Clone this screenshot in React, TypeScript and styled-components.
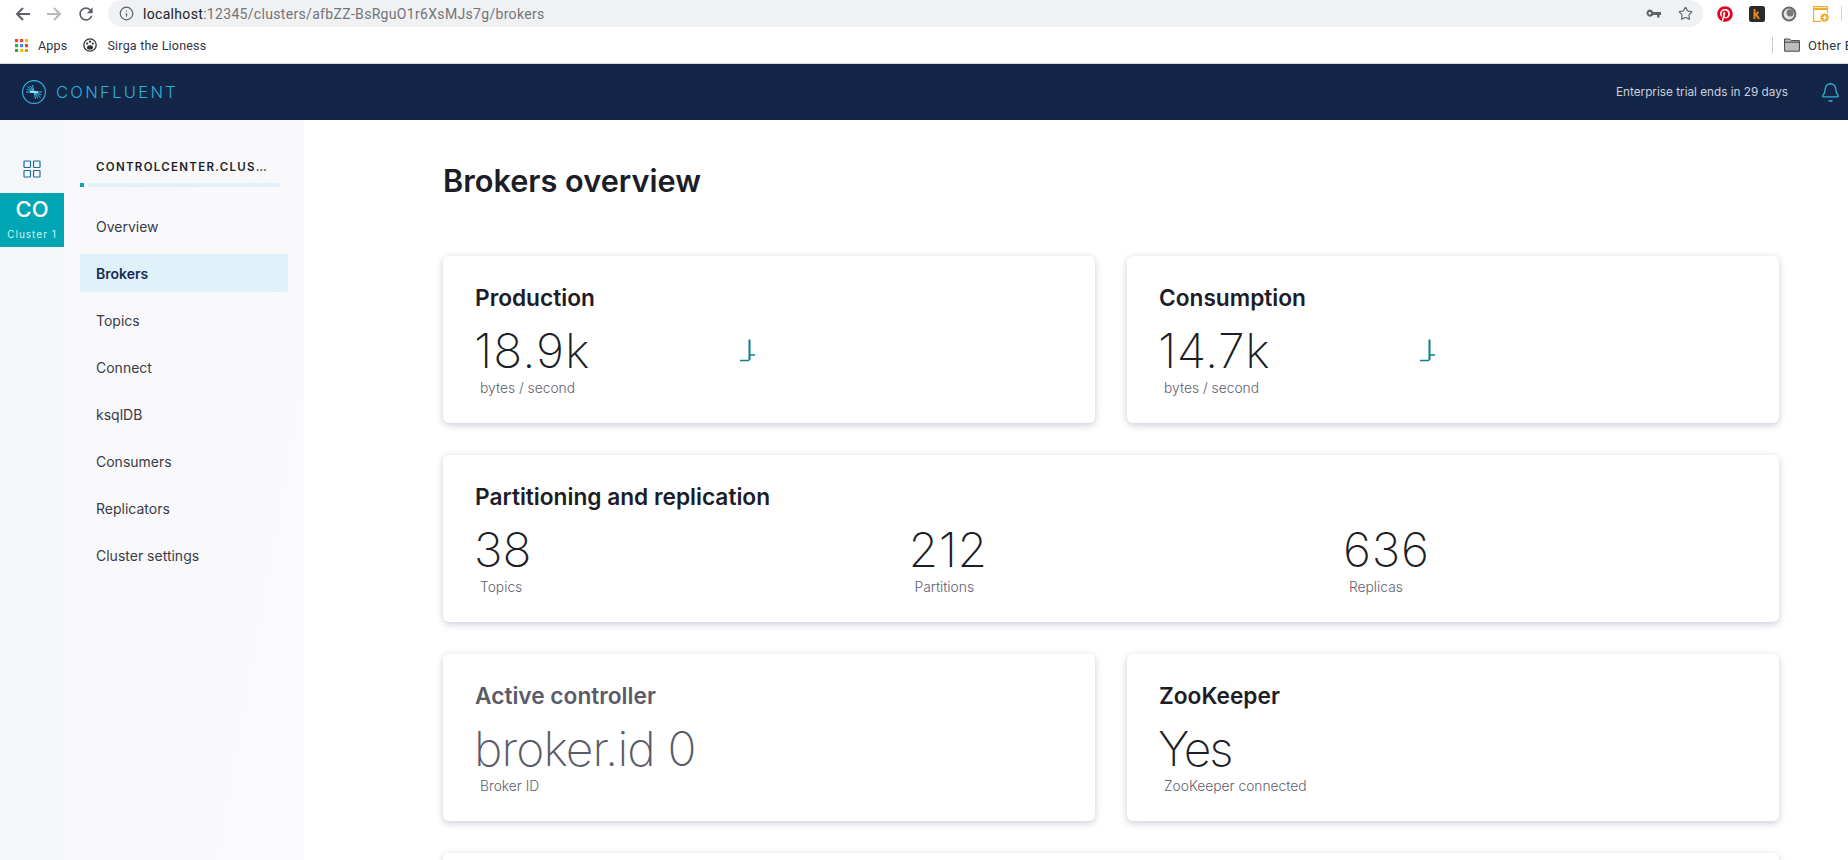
import React from "react";
import styled, { createGlobalStyle } from "styled-components";
import { Info, Star, Bell } from "lucide-react";
import { FaPinterest } from "react-icons/fa";

const Global = createGlobalStyle`
  html, body { margin: 0; padding: 0; height: 100%; overflow: hidden; background: #fff; }
  body { font-family: Inter, "Liberation Sans", sans-serif; }
  * { box-sizing: border-box; }
`;

const Page = styled.div`
  width: 1848px;
  height: 860px;
  overflow: hidden;
  display: flex;
  flex-direction: column;
`;

const Toolbar = styled.div`
  height: 27px;
  flex: none;
  display: flex;
  align-items: center;
  padding-left: 6px;
  background: #fff;
`;

const NavIcon = styled.span<{ $c?: string }>`
  width: 32px;
  flex: none;
  display: flex;
  justify-content: center;
  color: ${(p) => p.$c || "#5f6368"};
`;

const UrlBar = styled.div`
  margin-left: 6px;
  width: 1595px;
  height: 27px;
  flex: none;
  display: flex;
  align-items: center;
  background: #f0f1f3;
  border-radius: 14px;
  padding: 0 10px 0 11px;
  color: #5f6368;
`;

const UrlText = styled.span`
  margin-left: 9px;
  font: 400 14px "Roboto", sans-serif;
  letter-spacing: 0.32px;
  color: #70757a;
  flex: 1;
  white-space: nowrap;
  b { font-weight: 400; color: #202124; }
`;

const UrlActions = styled.div`
  display: flex;
  align-items: center;
  gap: 17px;
`;

const Extensions = styled.div`
  display: flex;
  align-items: center;
  margin-left: 14px;
  gap: 16px;
  flex: none;
`;

const ToolbarRule = styled.span`
  width: 1px;
  height: 15px;
  margin-left: 12px;
  background: #d0d2d5;
  flex: none;
`;

const Bookmarks = styled.div`
  height: 37px;
  flex: none;
  display: flex;
  align-items: center;
  padding: 0 0 0 15px;
  background: #fff;
  border-bottom: 1px solid #d6d8db;
  font: 400 12.5px "Roboto", sans-serif;
  letter-spacing: 0.2px;
  color: #303342;
  white-space: nowrap;
`;

const Mark = styled.span`
  display: flex;
  align-items: center;
  gap: 10px;
  margin-right: 16px;
  svg { flex: none; }
`;

const BookmarkEnd = styled.div`
  margin-left: auto;
  display: flex;
  align-items: center;
  gap: 8px;
  width: 76px;
  flex: none;
  height: 16px;
  border-left: 1px solid #c9cbce;
  padding-left: 11px;
  overflow: hidden;
  font-size: 13px;
  letter-spacing: 0.3px;
  svg { flex: none; }
`;

const Header = styled.header`
  height: 56px;
  flex: none;
  background: #142648;
  display: flex;
  align-items: center;
  padding: 0 7px 0 22px;
`;

const LogoText = styled.span`
  margin-left: 10px;
  font: 300 16.5px Inter, sans-serif;
  letter-spacing: 2.35px;
  color: #2fb0d8;
`;

const Trial = styled.span`
  margin-left: auto;
  font: 400 11.75px Inter, sans-serif;
  color: #c9d0dc;
`;

const BellWrap = styled.span`
  display: flex;
  margin-left: 32px;
  color: #2fb0d8;
`;

const Body = styled.div`
  flex: 1;
  display: flex;
  min-height: 0;
`;

const Rail = styled.aside`
  width: 64px;
  flex: none;
  background: #f5f6fa;
  padding-top: 40px;
  display: flex;
  flex-direction: column;
  align-items: stretch;
`;

const RailIcon = styled.span`
  height: 33px;
  display: flex;
  justify-content: center;
  align-items: flex-start;
`;

const ClusterTile = styled.div`
  height: 54px;
  background: #00a6b4;
  color: #fff;
  display: flex;
  flex-direction: column;
  align-items: center;
  padding-top: 2px;
`;

const TileCode = styled.span`
  font: 500 22px/28px Inter, sans-serif;
`;

const TileName = styled.span`
  font: 400 10px/14px Inter, sans-serif;
  letter-spacing: 1px;
  margin-top: 4px;
  color: #d6f1f4;
`;

const Side = styled.nav`
  width: 240px;
  flex: none;
  background: linear-gradient(100deg, #f8f8fb 0%, #f9f9fc 70%, #fbfbfd 100%);
  padding: 0 16px;
`;

const ClusterHead = styled.div`
  height: 67px;
  display: flex;
  flex-direction: column;
  justify-content: flex-end;
  margin-bottom: 20px;
`;

const ClusterName = styled.div`
  padding-left: 16px;
  font: 600 11.5px/14px Inter, sans-serif;
  letter-spacing: 1.3px;
  color: #1d1e26;
  white-space: nowrap;
`;

const Rule = styled.div`
  margin-top: 9px;
  display: flex;
  gap: 4px;
  height: 4px;
`;

const RuleDot = styled.span`
  width: 4px;
  background: #00a6b4;
`;

const RuleBar = styled.span`
  width: 192px;
  background: #dff1f9;
`;

const NavList = styled.div`
  display: flex;
  flex-direction: column;
  gap: 9.1px;
`;

const NavItem = styled.div<{ $active?: boolean }>`
  height: 38px;
  display: flex;
  align-items: center;
  padding-left: 16px;
  font: ${(p) => (p.$active ? 600 : 400)} 14px Inter, sans-serif;
  color: ${(p) => (p.$active ? "#172b54" : "#3a3b45")};
  background: ${(p) => (p.$active ? "#dff1f9" : "transparent")};
`;

const Main = styled.main`
  flex: 1;
  min-width: 0;
  padding: 41px 69px 0 139px;
  background: #fff;
`;

const Title = styled.h1`
  margin: 0 0 55px;
  font: 600 30.7px/40px Inter, sans-serif;
  color: #1c1d26;
`;

const Cards = styled.div`
  display: grid;
  grid-template-columns: 1fr 1fr;
  gap: 32px;
`;

const Card = styled.section<{ $wide?: boolean; $muted?: boolean }>`
  grid-column: ${(p) => (p.$wide ? "1 / -1" : "auto")};
  height: 167px;
  background: #fff;
  border-radius: 6px;
  padding: 28px 32px 0;
  box-shadow: 0 2px 7px rgba(62, 66, 110, 0.28);
  color: ${(p) => (p.$muted ? "#5a5b68" : "#1c1d26")};
`;

const CardTitle = styled.h2`
  margin: 0 0 13px;
  font: 600 22.7px/28px Inter, sans-serif;
`;

const CardRow = styled.div`
  display: grid;
  grid-template-columns: repeat(3, 434.5px);
`;

const StatRow = styled.div`
  display: flex;
  align-items: flex-start;
`;

const Stat = styled.div<{ $w?: number }>`
  width: ${(p) => (p.$w ? `${p.$w}px` : "auto")};
  flex: none;
`;

const Value = styled.div<{ $track?: number }>`
  font: 200 48px/52px Inter, sans-serif;
  letter-spacing: ${(p) => p.$track ?? 0}px;
  margin-left: -1px;
`;

const Unit = styled.div`
  margin-top: 2px;
  padding-left: 5px;
  font: 300 13.8px/18px Inter, sans-serif;
  color: #5f6070;
`;

const Spark = styled.svg`
  display: block;
  margin-top: 13px;
  flex: none;
`;

const Sparkline = () => (
  <Spark width="16" height="24" viewBox="0 0 16 24" fill="none" stroke="#0b7f82">
    <path d="M0 22.5H9.5" strokeWidth="1.5" />
    <path d="M9.5 17H15" strokeWidth="1.5" />
    <path d="M9.5 1.5V22" strokeWidth="2" />
  </Spark>
);

const BackIcon = () => (
  <svg width="15" height="14" viewBox="0 0 15 14" fill="none" stroke="currentColor" strokeWidth="2">
    <path d="M15 7H2M8 1 2 7l6 6" />
  </svg>
);

const ForwardIcon = () => (
  <svg width="15" height="14" viewBox="0 0 15 14" fill="none" stroke="currentColor" strokeWidth="2">
    <path d="M0 7h13M7 1l6 6-6 6" />
  </svg>
);

const ReloadIcon = () => (
  <svg width="20" height="20" viewBox="0 0 24 24" fill="currentColor">
    <path d="M17.65 6.35A7.958 7.958 0 0 0 12 4c-4.42 0-7.99 3.58-7.99 8s3.57 8 7.99 8c3.73 0 6.84-2.55 7.73-6h-2.08A5.99 5.99 0 0 1 12 18c-3.31 0-6-2.69-6-6s2.69-6 6-6c1.66 0 3.14.69 4.22 1.78L13 11h7V4l-2.35 2.35z" />
  </svg>
);

const AppsIcon = () => (
  <svg width="13" height="13" viewBox="0 0 13 13">
    {["#ea4335", "#ea4335", "#fbbc05", "#34a853", "#4285f4", "#ea4335", "#34a853", "#fbbc05", "#fb8c00"].map((c, i) => (
      <rect key={i} x={(i % 3) * 5} y={Math.floor(i / 3) * 5} width="3.2" height="3.2" fill={c} />
    ))}
  </svg>
);

const PawIcon = () => (
  <svg width="14" height="14" viewBox="0 0 14 14">
    <circle cx="7" cy="7" r="6.2" fill="#fff" stroke="#333" strokeWidth="1.3" />
    <circle cx="4.2" cy="5.6" r="1.1" fill="#333" />
    <circle cx="7" cy="3.6" r="1.2" fill="#333" />
    <circle cx="9.8" cy="5.6" r="1.1" fill="#333" />
    <ellipse cx="7" cy="9.4" rx="3" ry="2.2" fill="#333" />
  </svg>
);

const KeyIcon = () => (
  <svg width="15" height="9" viewBox="0 0 15 9" fill="#5f6368">
    <path d="M3.8 0.5a3.6 3.6 0 0 1 3.4 2.5H15V6h-1.5v2.4h-2.4V6H7.2A3.6 3.6 0 1 1 3.8 0.5Zm0 2.4a1.3 1.3 0 1 0 0 2.6 1.3 1.3 0 0 0 0-2.6Z" fillRule="evenodd" />
  </svg>
);

const KIcon = () => (
  <svg width="16" height="16" viewBox="0 0 16 16">
    <rect width="16" height="16" rx="2.5" fill="#2b2a28" />
    <path d="M5.5 3v10M5.5 9.5l4-3.5M7 8.2l3 4.8" stroke="#e8851b" strokeWidth="2" fill="none" />
  </svg>
);

const OrbIcon = () => (
  <svg width="16" height="16" viewBox="0 0 16 16">
    <circle cx="8" cy="8" r="6.4" fill="#e4e4e4" stroke="#6b6b6b" strokeWidth="2" />
    <circle cx="9.2" cy="6.8" r="3.6" fill="#777" />
  </svg>
);

const CalIcon = () => (
  <svg width="16" height="16" viewBox="0 0 16 16" fill="none">
    <path d="M8 15.4H.6V.6h13.8v7" stroke="#f9a825" strokeWidth="1.1" />
    <path d="M.6 3h13.8" stroke="#f9a825" strokeWidth="2" />
    <circle cx="11.6" cy="11.6" r="4.2" fill="#f9a825" />
    <path d="M11.6 9.5v4.2M9.5 11.6h4.2" stroke="#fff" strokeWidth="1.3" />
  </svg>
);

const FolderIcon = () => (
  <svg width="16" height="14" viewBox="0 0 16 14">
    <path d="M.6 1h5l1.6 1.6h8.2v10.6H.6Z" fill="#bdbdbd" stroke="#444" strokeWidth="1" />
    <path d="M.6 4.2h14.8" stroke="#444" strokeWidth="1" />
  </svg>
);

const ConfluentLogo = () => (
  <svg width="24" height="24" viewBox="0 0 24 24" fill="none" stroke="#35b8e0" style={{ flex: "none" }}>
    <circle cx="12" cy="12" r="11.4" strokeWidth="1.1" />
    <g strokeWidth="1">
      <path d="M12 12 5.5 6.5M12 12 4.5 9M12 12H4M12 12 8 5.5M12 12 10.5 5" />
      <path d="M12 12l6.5 5.5M12 12l7.5 3M12 12h8M12 12l4 6.5M12 12l1.5 7" />
    </g>
    <path d="M8 12h8" stroke="#d8f3fb" strokeWidth="1.4" />
  </svg>
);

const GridIcon = () => (
  <svg width="18" height="18" viewBox="0 0 18 18" fill="none" stroke="#1a6d9c" strokeWidth="1.2">
    <rect x="1" y="1" width="6.5" height="6.5" rx="0.8" />
    <rect x="10.5" y="1" width="6.5" height="6.5" rx="0.8" />
    <rect x="1" y="10.5" width="6.5" height="6.5" rx="0.8" />
    <rect x="10.5" y="10.5" width="6.5" height="6.5" rx="0.8" />
  </svg>
);

const navItems = ["Overview", "Brokers", "Topics", "Connect", "ksqlDB", "Consumers", "Replicators", "Cluster settings"];

export default function App() {
  return (
    <Page>
      <Global />
      <Toolbar>
        <NavIcon><BackIcon /></NavIcon>
        <NavIcon $c="#b6b8bb"><ForwardIcon /></NavIcon>
        <NavIcon><ReloadIcon /></NavIcon>
        <UrlBar>
          <Info size={15} strokeWidth={2} />
          <UrlText><b>localhost</b>:12345/clusters/afbZZ-BsRguO1r6XsMJs7g/brokers</UrlText>
          <UrlActions>
            <KeyIcon />
            <Star size={15} strokeWidth={1.8} />
          </UrlActions>
        </UrlBar>
        <Extensions>
          <FaPinterest size={16} color="#e60023" />
          <KIcon />
          <OrbIcon />
          <CalIcon />
        </Extensions>
        <ToolbarRule />
      </Toolbar>
      <Bookmarks>
        <Mark><AppsIcon />Apps</Mark>
        <Mark><PawIcon />Sirga the Lioness</Mark>
        <BookmarkEnd><FolderIcon />Other B</BookmarkEnd>
      </Bookmarks>
      <Header>
        <ConfluentLogo />
        <LogoText>CONFLUENT</LogoText>
        <Trial>Enterprise trial ends in 29 days</Trial>
        <BellWrap><Bell size={21} strokeWidth={1.5} /></BellWrap>
      </Header>
      <Body>
        <Rail>
          <RailIcon><GridIcon /></RailIcon>
          <ClusterTile>
            <TileCode>CO</TileCode>
            <TileName>Cluster 1</TileName>
          </ClusterTile>
        </Rail>
        <Side>
          <ClusterHead>
            <ClusterName>CONTROLCENTER.CLUS…</ClusterName>
            <Rule><RuleDot /><RuleBar /></Rule>
          </ClusterHead>
          <NavList>
            {navItems.map((n) => (
              <NavItem key={n} $active={n === "Brokers"}>{n}</NavItem>
            ))}
          </NavList>
        </Side>
        <Main>
          <Title>Brokers overview</Title>
          <Cards>
            <Card>
              <CardTitle>Production</CardTitle>
              <StatRow>
                <Stat $w={265}><Value $track={1}>18.9k</Value><Unit>bytes / second</Unit></Stat>
                <Sparkline />
              </StatRow>
            </Card>
            <Card>
              <CardTitle>Consumption</CardTitle>
              <StatRow>
                <Stat $w={261}><Value $track={0.5}>14.7k</Value><Unit>bytes / second</Unit></Stat>
                <Sparkline />
              </StatRow>
            </Card>
            <Card $wide>
              <CardTitle>Partitioning and replication</CardTitle>
              <CardRow>
                <Stat><Value>38</Value><Unit>Topics</Unit></Stat>
                <Stat><Value $track={0.5}>212</Value><Unit>Partitions</Unit></Stat>
                <Stat><Value $track={0.8}>636</Value><Unit>Replicas</Unit></Stat>
              </CardRow>
            </Card>
            <Card $muted>
              <CardTitle>Active controller</CardTitle>
              <Stat><Value $track={-0.9}>broker.id 0</Value><Unit>Broker ID</Unit></Stat>
            </Card>
            <Card>
              <CardTitle>ZooKeeper</CardTitle>
              <Stat><Value $track={-2}>Yes</Value><Unit>ZooKeeper connected</Unit></Stat>
            </Card>
            <Card $wide />
          </Cards>
        </Main>
      </Body>
    </Page>
  );
}
